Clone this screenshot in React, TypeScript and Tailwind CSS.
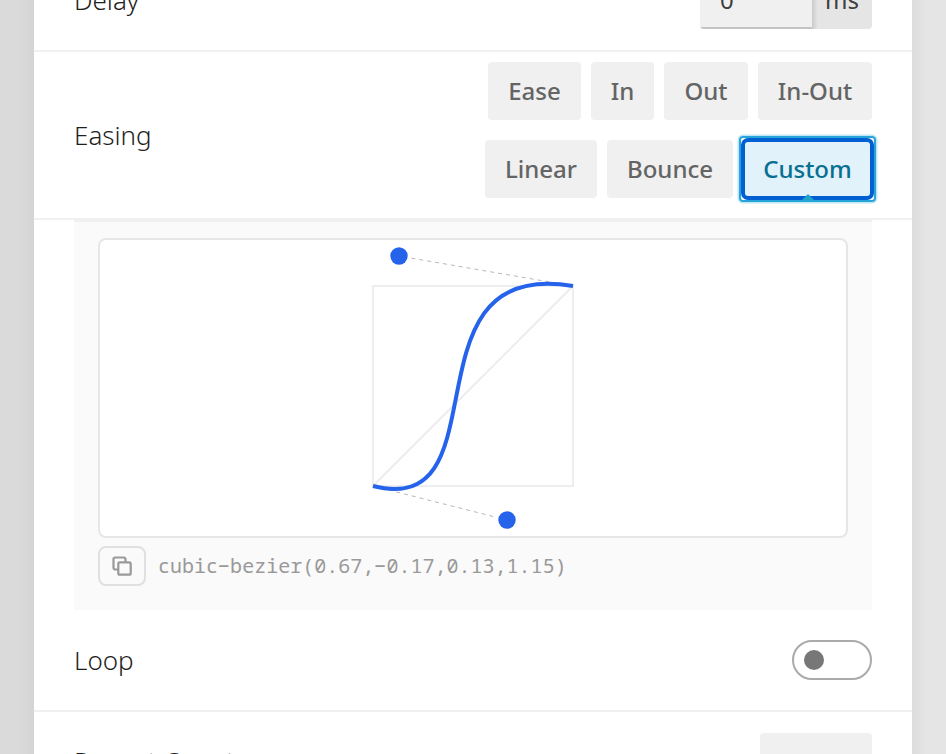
import React from "react";

const optionBase =
  "flex h-[58px] shrink-0 items-center justify-center rounded-[4px] text-[24px] leading-none";

function Option({ label, width }: { label: string; width: string }) {
  return (
    <button className={`${optionBase} bg-[#f0f0f0] font-medium text-[#646464] ${width}`}>
      <span className="whitespace-nowrap">{label}</span>
    </button>
  );
}

function CurveEditor() {
  return (
    <svg width="746" height="296" viewBox="100 240 746 296" fill="none" className="block">
      <rect x="373" y="286" width="200" height="200" stroke="#eeeeee" strokeWidth="2" />
      <path d="M373 486L573 286" stroke="#ebebeb" strokeWidth="1.8" />
      <path d="M573 286L399 256M373 486L507 520" stroke="#b8b8b8" strokeWidth="1" strokeDasharray="4 4" />
      <circle cx="399" cy="256" r="11" fill="white" />
      <circle cx="507" cy="520" r="11" fill="white" />
      <path d="M373 486C507 520 399 256 573 286" stroke="#2563eb" strokeWidth="4" />
      <circle cx="399" cy="256" r="8.7" fill="#2563eb" />
      <circle cx="507" cy="520" r="8.7" fill="#2563eb" />
    </svg>
  );
}

export default function App() {
  return (
    <div className="flex h-[754px] w-[946px] overflow-hidden font-['Noto_Sans',sans-serif] text-[#1e1e1e]">
      <div className="w-[34px] shrink-0 bg-linear-to-r from-[#dadada] from-60% to-[#d4d4d4]" />
      <main className="h-[754px] w-[878px] shrink-0 overflow-hidden bg-white text-[26px] font-light">
        <section className="flex h-[52px] items-end justify-between border-b-2 border-[#f0f0f0] px-[40px] pb-[21px]">
          <span className="mb-[11px] leading-[36px]">Delay</span>
          <div className="flex h-[58px] w-[172px] overflow-hidden rounded-[4px] text-[24px] font-normal leading-[58px] text-[#3d3d3d]">
            <div className="w-[112px] border-b-2 border-[#c3c3c3] bg-[#f0f0f0] pl-[20px]">0</div>
            <div className="w-[60px] bg-linear-to-r from-[#cbcbcb] to-[#e5e5e5] to-10% pl-[13px]">ms</div>
          </div>
        </section>

        <section className="flex h-[168px] items-center justify-between border-b-2 border-[#f0f0f0] px-[40px]">
          <span className="leading-[36px]">Easing</span>
          <div className="flex flex-col items-end gap-5 pb-[10px]">
            <div className="flex gap-[10px]">
              <Option label="Ease" width="w-[93px]" />
              <Option label="In" width="w-[63px]" />
              <Option label="Out" width="w-[84px]" />
              <Option label="In-Out" width="w-[114px]" />
            </div>
            <div className="flex gap-[10px]">
              <Option label="Linear" width="w-[112px]" />
              <Option label="Bounce" width="w-[126px]" />
              <button className={`${optionBase} relative w-[129px] bg-[#e1f2fb] font-medium text-[#086f91]`}>
                <span>Custom</span>
                <span className="absolute -inset-x-[4px] -inset-y-[4px] rounded-[4px] border-2 border-[#27a5d9] shadow-[0_0_0_1.5px_#bfe6f5]" />
                <span className="absolute -inset-[2px] rounded-[7px] border-4 border-[#005fd3]" />
                <span className="absolute -bottom-[2px] left-[59px] h-[6px] w-[12px] bg-[#21a3c8] [clip-path:polygon(50%_0,100%_100%,0_100%)]" />
              </button>
            </div>
          </div>
        </section>

        <section className="mx-[40px] h-[390px] border-t-2 border-[#f0f0f0] bg-[#fafafa] px-[24px] pt-[16px]">
          <div className="h-[300px] w-[750px] overflow-hidden rounded-[8px] border-2 border-[#e6e6e6] bg-white">
            <CurveEditor />
          </div>
          <div className="mt-[8px] flex items-center">
            <button className="flex h-[40px] w-[48px] items-center justify-center rounded-[8px] border-2 border-[#e0e0e0]">
              <svg width="20" height="20" viewBox="0 0 20 20" fill="none" stroke="#999999" strokeWidth="2.2">
                <rect x="6.3" y="6.3" width="12.4" height="12.4" rx="1.5" />
                <path d="M6 13.5H3.5Q1.5 13.5 1.5 11.5V3Q1.5 1.5 3 1.5H11.5Q13.5 1.5 13.5 3.5V6" />
              </svg>
            </button>
            <code className="ml-[12px] whitespace-pre font-['Noto_Sans_Mono','DejaVu_Sans_Mono',monospace] text-[20px] font-normal leading-[24px] tracking-[0.02px] text-[#999999]">
              cubic−bezier(0.67,−0.17,0.13,1.15)
            </code>
          </div>
        </section>

        <section className="flex h-[102px] items-center justify-between border-b-2 border-[#f0f0f0] px-[40px]">
          <span className="leading-[36px]">Loop</span>
          <button className="flex h-[40px] w-[80px] items-center rounded-full border-2 border-[#aaaaaa] pl-[10px]">
            <span className="h-[20px] w-[20px] rounded-full bg-[#777777]" />
          </button>
        </section>

        <section className="flex items-start justify-between px-[40px] pt-[21px]">
          <span className="mt-[10px] leading-[36px]">Repeat Count</span>
          <div className="h-[58px] w-[112px] rounded-[4px] bg-[#f0f0f0]" />
        </section>
      </main>
      <div className="w-[34px] shrink-0 bg-linear-to-r from-[#dcdcdc] to-[#e5e5e5] to-40%" />
    </div>
  );
}
